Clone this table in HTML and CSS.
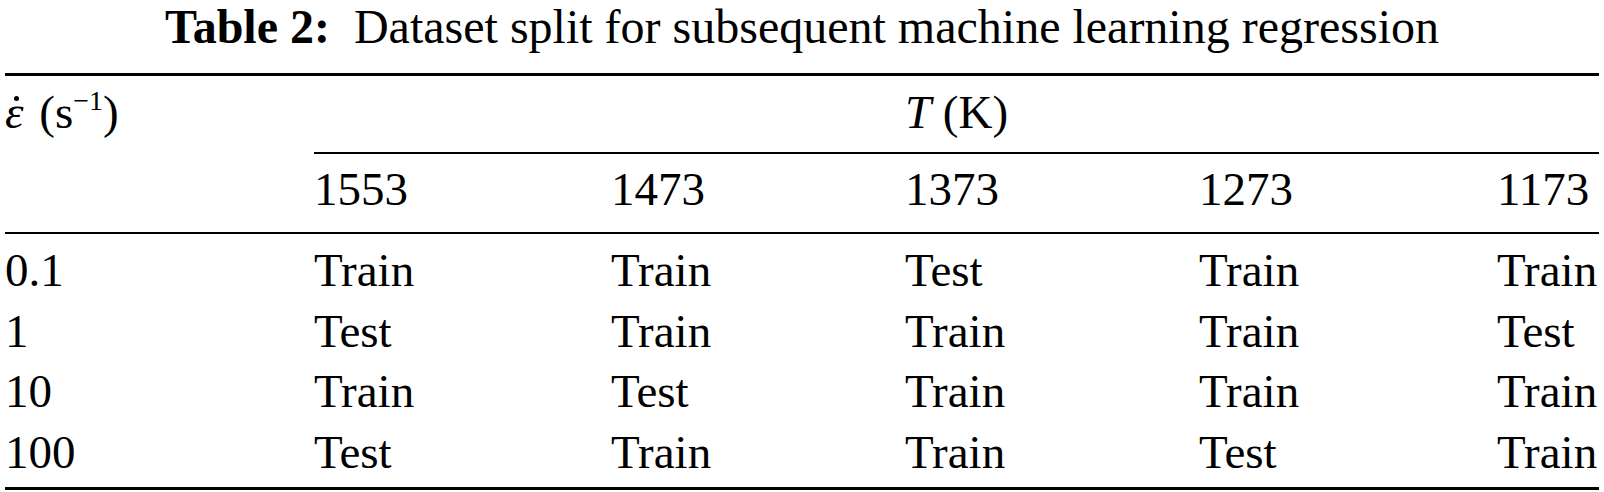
FILE: index.html
```html
<!DOCTYPE html>
<html>
<head>
    <meta charset="UTF-8">
    <title>Table 2: Dataset split</title>
    <link rel="stylesheet" href="styles.css">
</head>
<body>
    <div class="caption"><span class="caption-label">Table 2:</span>Dataset split for subsequent machine learning regression</div>

    <table class="split-table">
        <colgroup>
            <col class="col-rate">
            <col class="col-t1">
            <col class="col-t2">
            <col class="col-t3">
            <col class="col-t4">
            <col class="col-t5">
        </colgroup>
        <thead>
            <tr class="head-top">
                <th class="rate-head"><span class="eps">ε</span> (s<sup>−1</sup>)</th>
                <th class="temp-head" colspan="5"><i>T</i> (K)</th>
            </tr>
            <tr class="head-sub">
                <th></th>
                <th>1553</th>
                <th>1473</th>
                <th>1373</th>
                <th>1273</th>
                <th>1173</th>
            </tr>
        </thead>
        <tbody>
            <tr class="first-row">
                <td>0.1</td>
                <td>Train</td>
                <td>Train</td>
                <td>Test</td>
                <td>Train</td>
                <td>Train</td>
            </tr>
            <tr>
                <td>1</td>
                <td>Test</td>
                <td>Train</td>
                <td>Train</td>
                <td>Train</td>
                <td>Test</td>
            </tr>
            <tr>
                <td>10</td>
                <td>Train</td>
                <td>Test</td>
                <td>Train</td>
                <td>Train</td>
                <td>Train</td>
            </tr>
            <tr class="last-row">
                <td>100</td>
                <td>Test</td>
                <td>Train</td>
                <td>Train</td>
                <td>Test</td>
                <td>Train</td>
            </tr>
        </tbody>
    </table>
</body>
</html>
```

FILE: styles.css
```css
body {
    margin: 0;
    padding: 0 5px;
    background: #fff;
    color: #000;
    font-family: "Liberation Serif", "Times New Roman", serif;
    font-size: 47px;
}
.caption {
    text-align: center;
    font-size: 48px;
    line-height: 53px;
    margin-bottom: 20px;
}
.caption-label {
    font-weight: bold;
    margin-right: 24px;
}
.split-table {
    width: 1594px;
    table-layout: fixed;
    border-collapse: collapse;
    border-top: 3px solid #000;
    border-bottom: 3px solid #000;
}
.col-rate { width: 309px; }
.col-t1 { width: 297px; }
.col-t2 { width: 294px; }
.col-t3 { width: 294px; }
.col-t4 { width: 298px; }
.col-t5 { width: 102px; }
th, td {
    padding: 0;
    text-align: left;
    font-weight: normal;
    line-height: 60px;
    white-space: nowrap;
    vertical-align: top;
}
.head-top th {
    padding-top: 6px;
    padding-bottom: 10px;
}
.temp-head {
    text-align: center;
    border-bottom: 2px solid #000;
}
.head-sub th {
    padding-top: 5px;
    padding-bottom: 13px;
}
.head-sub {
    border-bottom: 2px solid #000;
}
td {
    line-height: 60.5px;
}
.first-row td {
    padding-top: 6px;
}
.last-row td {
    padding-bottom: 5px;
}
sup {
    font-size: 28px;
    line-height: 0;
    vertical-align: 18px;
}
.eps {
    position: relative;
    font-style: italic;
    margin-right: 4px;
}
/* dot accent over epsilon (strain rate) */
.eps::before {
    content: "";
    position: absolute;
    left: 9px;
    top: 10px;
    width: 5px;
    height: 5px;
    border-radius: 50%;
    background: #000;
}
```
